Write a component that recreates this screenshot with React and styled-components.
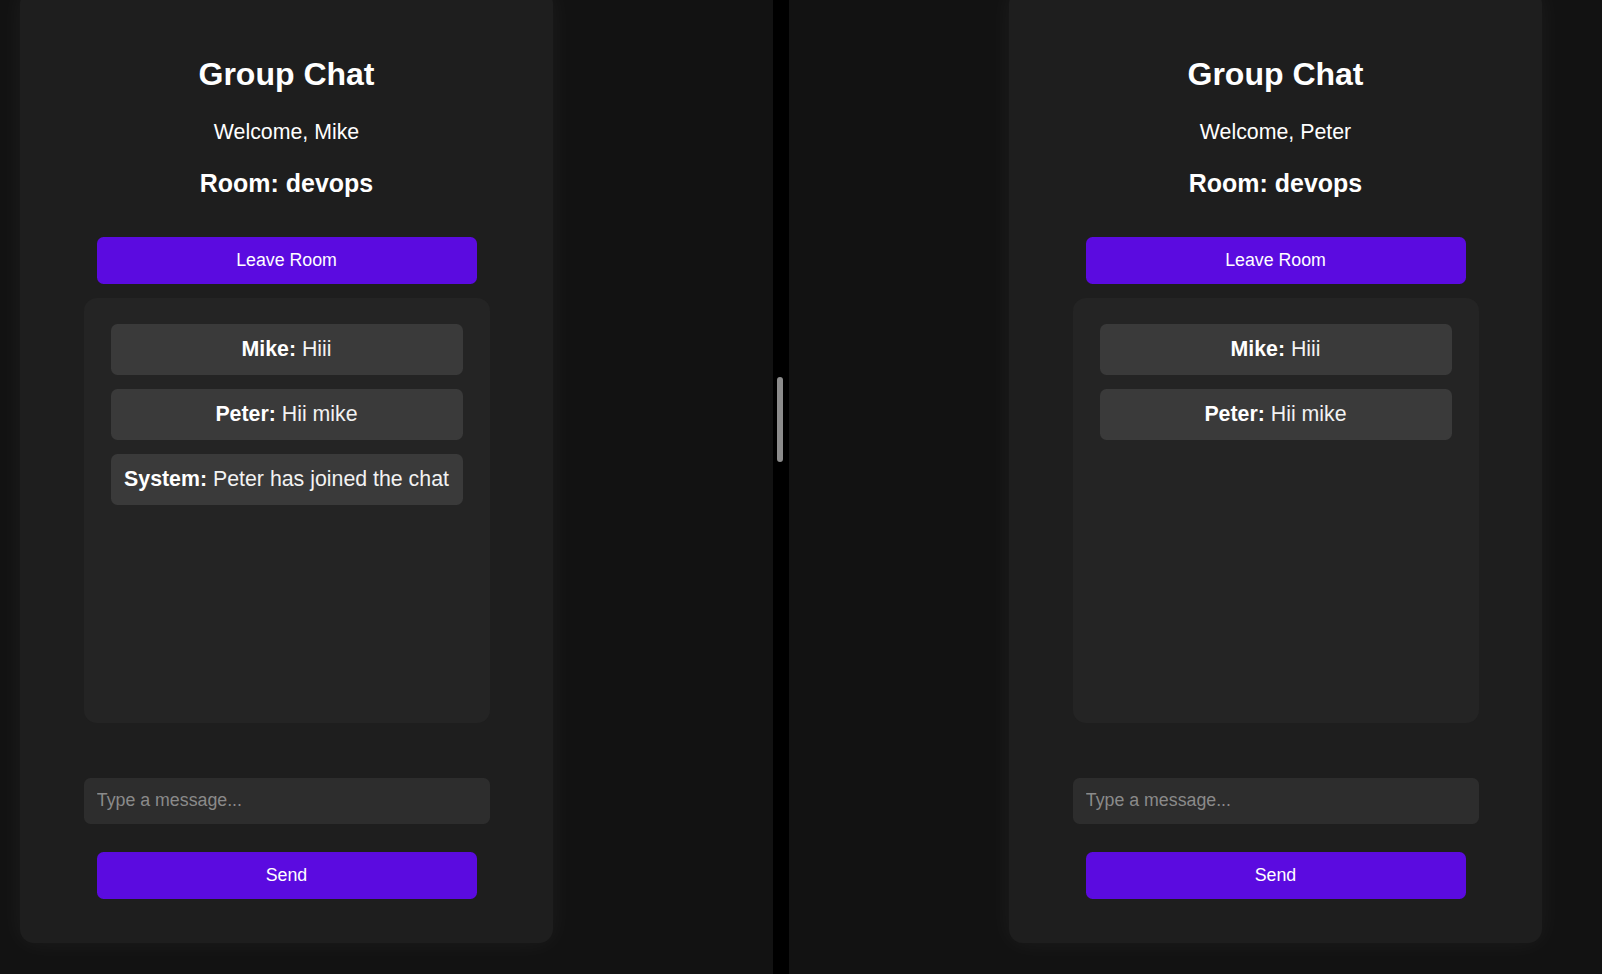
import React from "react";
import styled, { createGlobalStyle } from "styled-components";

const GlobalStyle = createGlobalStyle`
  html, body {
    margin: 0;
    padding: 0;
    background: #121212;
    overflow: hidden;
  }
  * {
    box-sizing: border-box;
  }
`;

const Screen = styled.div`
  display: flex;
  width: 1602px;
  height: 974px;
  overflow: hidden;
  background: #121212;
  font-family: "Liberation Sans", Arial, sans-serif;
  color: #fff;
`;

const Pane = styled.div`
  display: flex;
  align-items: flex-start;
  width: ${(p) => p.$width};
  flex: ${(p) => (p.$grow ? 1 : "none")};
  padding-left: ${(p) => p.$offset}px;
`;

const Divider = styled.div`
  width: 16px;
  flex: none;
  background: #000;
  padding-top: 377px;
  display: flex;
  justify-content: center;
`;

const Thumb = styled.div`
  width: 6px;
  height: 85px;
  margin-left: -3px;
  border-radius: 3px;
  background: #8c8c8c;
`;

const Card = styled.div`
  width: 533px;
  height: 953px;
  margin-top: -10px;
  padding-top: 66px;
  display: flex;
  flex-direction: column;
  align-items: center;
  background: #1e1e1e;
  border-radius: 14px;
  box-shadow: 0 0 26px rgba(255, 255, 255, 0.05);
`;

const Title = styled.h2`
  margin: 0;
  font-size: 32px;
  line-height: 37px;
  font-weight: 700;
`;

const Welcome = styled.p`
  margin: 27px 0 0;
  font-size: 21.33px;
  line-height: 24.5px;
`;

const Room = styled.h3`
  margin: 24.5px 0 0;
  font-size: 24.96px;
  line-height: 28.7px;
  font-weight: 700;
`;

const Button = styled.button`
  display: block;
  width: 380px;
  height: 47px;
  margin-top: ${(p) => p.$top}px;
  border: none;
  border-radius: 6.5px;
  background: #5b0be0;
  color: #fff;
  font-family: inherit;
  font-size: 17.78px;
  cursor: pointer;
`;

const MessageBox = styled.div`
  width: 406px;
  height: 425px;
  margin-top: 14px;
  padding: 26px 27px;
  display: flex;
  flex-direction: column;
  gap: 14px;
  background: #242424;
  border-radius: 13px;
`;

const Message = styled.div`
  padding: 13.3px;
  background: #3a3a3a;
  border-radius: 6.5px;
  text-align: center;
  font-size: 21.33px;
  line-height: 24.5px;
  color: #f2f2f2;
  white-space: nowrap;
`;

const Author = styled.strong`
  font-weight: 700;
  color: #fff;
`;

const Input = styled.input`
  display: block;
  width: 406px;
  height: 46.5px;
  margin-top: 55px;
  padding: 0 13.3px;
  border: none;
  outline: none;
  border-radius: 6.5px;
  background: #2d2d2d;
  color: #fff;
  font-family: inherit;
  font-size: 17.78px;

  &::placeholder {
    color: #8a8a8a;
  }
`;

const ChatWindow = ({ user, messages }) => (
  <Card>
    <Title>Group Chat</Title>
    <Welcome>Welcome, {user}</Welcome>
    <Room>Room: devops</Room>
    <Button $top={39}>Leave Room</Button>
    <MessageBox>
      {messages.map((m, i) => (
        <Message key={i}>
          <Author>{m.from}:</Author> {m.text}
        </Message>
      ))}
    </MessageBox>
    <Input placeholder="Type a message..." />
    <Button $top={28}>Send</Button>
  </Card>
);

const mikeMessages = [
  { from: "Mike", text: "Hiii" },
  { from: "Peter", text: "Hii mike" },
  { from: "System", text: "Peter has joined the chat" },
];

const peterMessages = [
  { from: "Mike", text: "Hiii" },
  { from: "Peter", text: "Hii mike" },
];

export default function App() {
  return (
    <>
      <GlobalStyle />
      <Screen>
        <Pane $width="773px" $offset={20}>
          <ChatWindow user="Mike" messages={mikeMessages} />
        </Pane>
        <Divider>
          <Thumb />
        </Divider>
        <Pane $grow $offset={220}>
          <ChatWindow user="Peter" messages={peterMessages} />
        </Pane>
      </Screen>
    </>
  );
}
